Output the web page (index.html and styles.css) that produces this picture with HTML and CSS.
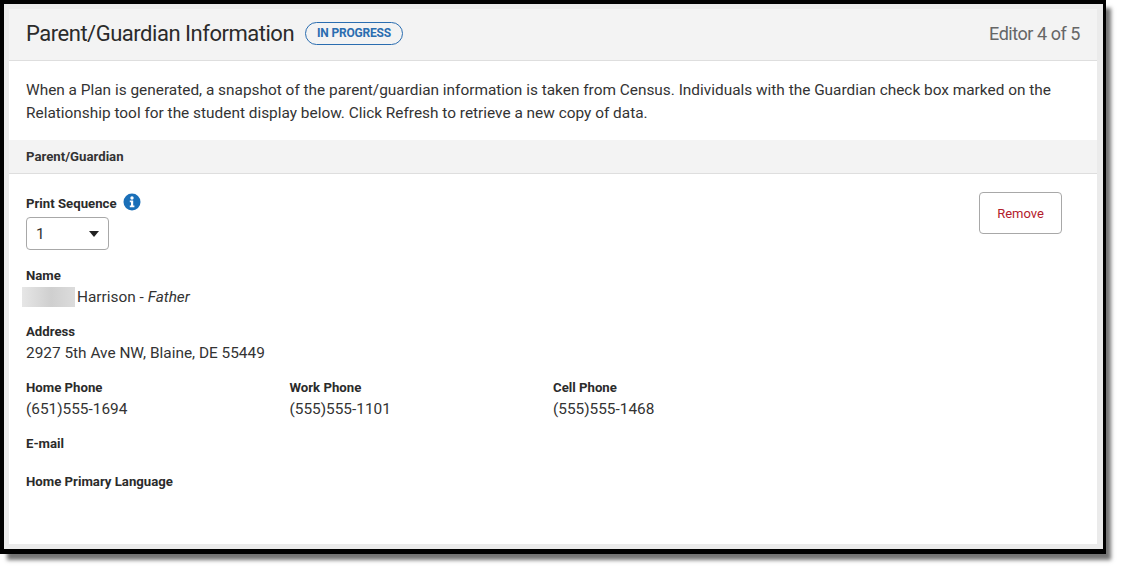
FILE: index.html
```html
<!DOCTYPE html>
<html lang="en">
<head>
<meta charset="utf-8">
<title>Parent/Guardian Information</title>
<link rel="stylesheet" href="styles.css">
</head>
<body>
<div class="frame">
  <main class="card">
    <header class="head">
      <div class="head-left">
        <h1 class="title">Parent/Guardian Information</h1>
        <span class="badge">IN PROGRESS</span>
      </div>
      <div class="editor">Editor 4 of 5</div>
    </header>
    <p class="intro">When a Plan is generated, a snapshot of the parent/guardian information is taken from Census. Individuals with the Guardian check box marked on the Relationship tool for the student display below. Click Refresh to retrieve a new copy of data.</p>
    <h2 class="section">Parent/Guardian</h2>
    <section class="body">
      <button class="remove" type="button">Remove</button>
      <div class="label-row">
        <span class="label seq">Print Sequence</span>
        <svg class="info" width="18" height="18" viewBox="0 0 18 18" aria-hidden="true"><circle cx="9" cy="9" r="8.5" fill="#1a6fb8"/><circle cx="9" cy="5" r="1.7" fill="#fff"/><path d="M6.8 7.6h3.4v5h1.2v1.7H6.8v-1.7H8v-3.3H6.8z" fill="#fff"/></svg>
      </div>
      <div class="select"><span>1</span><i class="caret"></i></div>
      <div class="field name-field">
        <div class="label">Name</div>
        <div class="value"><span class="blur"></span>Harrison - <em>Father</em></div>
      </div>
      <div class="field">
        <div class="label">Address</div>
        <div class="value">2927 5th Ave NW, Blaine, DE 55449</div>
      </div>
      <div class="phones">
        <div><div class="label">Home Phone</div><div class="value">(651)555-1694</div></div>
        <div><div class="label">Work Phone</div><div class="value">(555)555-1101</div></div>
        <div><div class="label">Cell Phone</div><div class="value">(555)555-1468</div></div>
      </div>
      <div class="label email">E-mail</div>
      <div class="label lang">Home Primary Language</div>
    </section>
  </main>
</div>
</body>
</html>
```
FILE: styles.css
```css
* { box-sizing: border-box; }
html, body { margin: 0; padding: 0; background: #fff; }
body { width: 1122px; height: 569px; overflow: hidden; font-family: Roboto, "Liberation Sans", sans-serif; color: #2b2b2b; }
.frame {
  width: 1106px; height: 554px;
  background: #ebebeb;
  border: solid #000;
  border-width: 4px 3px 5px 4px;
  padding: 5px 6px 5px 5px;
  box-shadow: 6px 7px 4px -1px rgba(0,0,0,.55);
}
.card { height: 100%; background: #fff; }
.head {
  height: 52px; background: #f3f3f3; border-bottom: 1px solid #dedede;
  display: flex; align-items: center; justify-content: space-between;
  padding: 0 17px 2px;
}
.head-left { display: flex; align-items: center; gap: 11px; }
.title { margin: 0; font-size: 22px; font-weight: 400; color: #2b2b2b; letter-spacing: -.48px; }
.badge {
  height: 23px; line-height: 20px; padding: 0 11px;
  border: 1px solid #2a6db0; border-radius: 12px;
  font-size: 12px; font-weight: 700; color: #2a6db0; letter-spacing: -.2px;
}
.editor { font-size: 18px; color: #666; letter-spacing: -.45px; }
.intro { margin: 0; height: 79px; padding: 18px 17px 0; font-size: 15.4px; line-height: 23.4px; color: #333; }
.section {
  margin: 0; height: 34px; line-height: 33px; padding: 0 17px;
  background: #f3f3f3; border-bottom: 1px solid #dedede;
  font-size: 13.2px; font-weight: 700; color: #333;
}
.body { position: relative; padding: 19px 17px 0; }
.label { font-size: 13.2px; font-weight: 700; color: #2b2b2b; line-height: 16px; }
.value { font-size: 15.4px; line-height: 20px; color: #333; margin-top: 3px; }
.label-row { display: flex; align-items: center; gap: 6px; height: 20px; }
.seq { margin-top: 2px; }
.info { margin-top: -2px; }
.select {
  margin-top: 4px; width: 83px; height: 33px; border: 1px solid #a8a8a8; border-radius: 4px;
  display: flex; align-items: center; justify-content: space-between;
  padding: 0 9px; font-size: 15.4px; color: #333;
}
.caret { width: 0; height: 0; border-left: 5px solid transparent; border-right: 5px solid transparent; border-top: 6px solid #222; }
.remove {
  position: absolute; top: 18px; right: 35px; width: 83px; height: 42px;
  background: #fff; border: 1px solid #a8a8a8; border-radius: 4px;
  font: 400 13px Roboto, "Liberation Sans", sans-serif; color: #b3202c;
}
.field { margin-top: 17px; }
.name-field { margin-top: 18px; }
.blur { display: inline-block; width: 53px; height: 20px; margin-left: -4px; margin-right: 2px; vertical-align: top; background: linear-gradient(90deg, #e6e6e6, #cfcfcf 55%, #dcdcdc); }
.phones { display: grid; grid-template-columns: 263.5px 263.5px 1fr; margin-top: 17px; }
.email { margin-top: 17px; }
.lang { margin-top: 22px; }
```
